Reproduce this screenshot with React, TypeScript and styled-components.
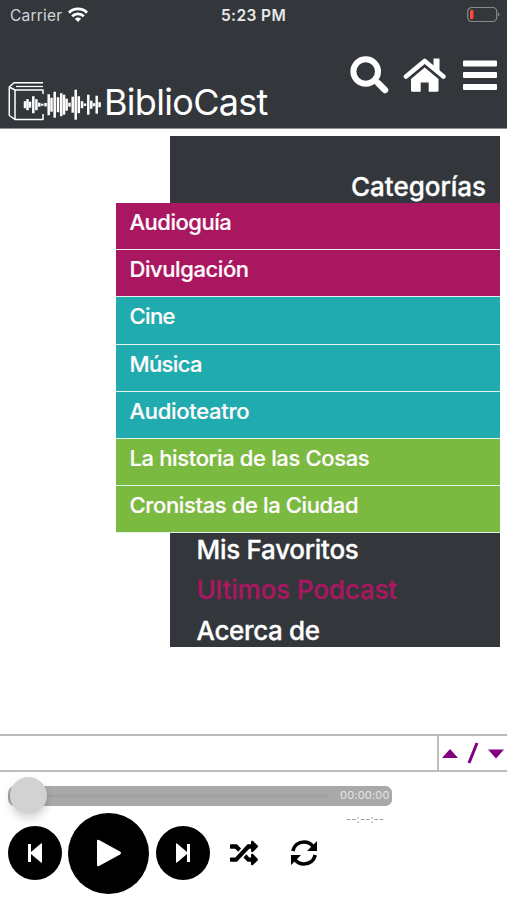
import React from "react";
import styled, { createGlobalStyle } from "styled-components";
import { FaRandom } from "react-icons/fa";

const Global = createGlobalStyle`
  * { box-sizing: border-box; }
  body { margin: 0; background: #fff; font-family: Inter, "Liberation Sans", sans-serif; }
`;
const Screen = styled.div`
  width: 507px; height: 900px; overflow: hidden; background: #fff;
  display: flex; flex-direction: column;
`;
const Header = styled.header`
  height: 129px; flex: none; background: #33373b; border-bottom: 1px solid #8b8e90; color: #fff;
`;
const StatusBar = styled.div`
  height: 30px; display: grid; grid-template-columns: 1fr auto 1fr; align-items: center;
  padding: 0 7px 0 10px; color: #e8e9e9;
`;
const Carrier = styled.div`
  display: flex; align-items: center; gap: 6px; font-size: 15.5px; letter-spacing: 0.2px; color: #d3d4d5;
`;
const Clock = styled.div`
  font-size: 15.5px; font-weight: 600; letter-spacing: 0.4px; margin-right: 3px;
`;
const BatterySlot = styled.div` display: flex; justify-content: flex-end; `;
const Bar = styled.div`
  display: flex; justify-content: space-between; height: 98px; padding: 0 10px 0 8px;
`;
const Brand = styled.div` display: flex; padding-top: 51px; `;
const BrandName = styled.h1`
  margin: -3px 0 0 1px; font-size: 36px; line-height: 48px; font-weight: 400; letter-spacing: -0.7px; white-space: nowrap;
`;
const Tools = styled.nav` display: flex; padding-top: 25px; `;
const ToolButton = styled.button<{ $gap?: number }>`
  border: 0; padding: 0; background: none; color: #fff; display: block; height: 42px; margin-left: ${(p) => p.$gap ?? 0}px;
  svg { display: block; }
`;
const Menu = styled.main`
  margin: 7px 7px 0 0; display: flex; flex-direction: column; align-items: flex-end; flex: none;
`;
const MenuTop = styled.div`
  width: 330.5px; height: 67.3px; background: #33373b; display: flex; align-items: flex-end; justify-content: flex-end; padding: 0 14px 0 0;
`;
const MenuTitle = styled.h2`
  margin: 0; color: #fff; font-size: 26px; line-height: 33px; font-weight: 500; letter-spacing: -0.03px;
  -webkit-text-stroke: 0.3px currentColor;
`;
const Category = styled.a<{ $color: string }>`
  display: block; width: 384.5px; height: 47.1px; background: ${(p) => p.$color};
  border-bottom: 1.5px solid #e3f3ee; padding: 6px 14px; color: #fffafc; font-size: 22px; line-height: 27px; font-weight: 500;
  -webkit-text-stroke: 0.2px currentColor;
`;
const MenuBottom = styled.div`
  width: 330.5px; height: 114px; background: #33373b; padding-left: 27px;
`;
const MenuLink = styled.a<{ $active?: boolean }>`
  display: block; height: 40.5px; line-height: 33px; font-size: 26px; font-weight: 500; color: ${(p) => (p.$active ? "#a91760" : "#fff")};
  -webkit-text-stroke: 0.3px currentColor;
`;
const Fit = styled.span<{ $ls: number }>` letter-spacing: ${(p) => p.$ls}px; white-space: nowrap; `;
const Player = styled.footer` margin-top: auto; height: 166px; flex: none; `;
const TrackRow = styled.div`
  height: 38px; border-top: 2px solid #bcbcbc; border-bottom: 2px solid #bcbcbc; display: flex;
`;
const TrackName = styled.div` width: 439px; border-right: 2px solid #bcbcbc; `;
const Expand = styled.button`
  flex: 1; border: 0; background: none; padding: 0; svg { display: block; }
`;
const Seek = styled.div`
  width: 384px; height: 20px; margin: 14px 0 0 8px; border-radius: 7px;
  background: linear-gradient(#a9a9a9 38%, #9f9f9f 50%, #a9a9a9 62%);
  display: flex; align-items: center; justify-content: space-between;
`;
const Knob = styled.div`
  width: 37px; height: 37px; margin: -2px 0 0 2px; border-radius: 50%; background: #d2d2d2; box-shadow: 0 5px 9px rgba(0,0,0,.16);
`;
const Elapsed = styled.span`
  width: 64px; height: 20px; line-height: 19px; padding-left: 12px; background: #a9a9a9; border-radius: 0 7px 7px 0; color: #e5e5e5;
  font-size: 11px; letter-spacing: 0.2px; white-space: nowrap;
`;
const Remaining = styled.div`
  margin-left: 346px; height: 14px; line-height: 14px; font-size: 11px; color: #999; letter-spacing: 0.2px; margin-top: 6px;
`;
const Controls = styled.div` display: flex; align-items: center; padding-left: 8px; height: 82px; margin-top: -14px; `;
const RoundButton = styled.button<{ $size: number; $gap?: number }>`
  width: ${(p) => p.$size}px; height: ${(p) => p.$size}px; border-radius: 50%; background: #000; color: #fff;
  border: 0; padding: 0; margin-left: ${(p) => p.$gap ?? 0}px; display: flex; align-items: center; justify-content: center; flex: none;
`;
const PlainButton = styled.button<{ $gap: number }>`
  border: 0; background: none; padding: 0; margin-left: ${(p) => p.$gap}px; color: #000; display: flex;
`;

const purple = "#a91760", teal = "#20acae", green = "#7aba41";
const categories: [string, string, number][] = [
  ["Audioguía", purple, -0.5], ["Divulgación", purple, -0.42], ["Cine", teal, -0.6], ["Música", teal, -0.6],
  ["Audioteatro", teal, -0.3], ["La historia de las Cosas", green, -0.36], ["Cronistas de la Ciudad", green, -0.37],
];
const wave: [number, number][] = [
  [17, 7], [19.5, 11], [22, 6], [25.3, 17], [28.4, 11], [31.3, 4], [34.3, 2], [37.6, 3.5], [40.7, 21], [43.5, 14],
  [46.7, 26], [50, 15], [53.2, 23], [56, 20], [58.6, 12], [61.5, 4], [64.7, 16], [67.7, 30], [70.8, 17], [74, 7],
  [77, 2.5], [80.3, 20], [83.3, 8], [86, 3], [88.7, 18], [91.6, 5],
];
const Logo = () => (
  <svg width="95" height="42" viewBox="0 0 95 42" fill="none" stroke="#fff">
    <path d="M35 1.700H6L1.300 6v28.500L7 38.500h28V33M35 13V9H7L1.300 6M7 9v29.500" strokeWidth="1.500" strokeLinejoin="round" />
    <path d="M8 5.500h27" strokeWidth="1.200" />
    {wave.map(([x, h]) => <path key={x} d={`M${x} ${23.7 - h / 2}v${h}`} strokeWidth="2.5" />)}
  </svg>
);
const Refresh = () => (
  <svg width="28" height="28" viewBox="0 0 28 28" fill="none" stroke="#000" strokeWidth="3.6">
    <path d="M2.800 12C4 6.500 8.500 3 14 3c4 0 7 1.700 9 4.500M25.200 16C24 21.500 19.500 25 14 25c-4 0-7-1.700-9-4.500" />
    <path d="M27 2v10H17zM1 26V16h10z" fill="#000" stroke="none" />
  </svg>
);

export default function App() {
  return (
    <>
      <Global />
      <Screen>
        <Header>
          <StatusBar>
            <Carrier>
              <span>Carrier</span>
              <svg width="20" height="16" viewBox="0 0 20 16" fill="none" stroke="#fff" strokeWidth="2.8">
                <path d="M1 5.7a12.7 12.7 0 0 1 18 0M4.2 9.2a8.2 8.2 0 0 1 11.6 0" />
                <path d="m10 15-3.1-3.2a4.4 4.4 0 0 1 6.2 0z" fill="#fff" stroke="none" />
              </svg>
            </Carrier>
            <Clock>5:23 PM</Clock>
            <BatterySlot>
              <svg width="34" height="18" viewBox="0 0 34 18">
                <rect x="1.7" y="1.5" width="29" height="14" rx="4" fill="none" stroke="#888b8d" strokeWidth="1.2" />
                <rect x="4" y="3.700" width="3.4" height="9.5" rx="1.5" fill="#ff463d" />
                <path d="M32 6.500q3 2 0 4z" fill="#888b8d" />
              </svg>
            </BatterySlot>
          </StatusBar>
          <Bar>
            <Brand><Logo /><BrandName>BiblioCast</BrandName></Brand>
            <Tools>
              <ToolButton aria-label="Buscar">
                <svg width="41" height="42" viewBox="0 0 41 42" fill="none" stroke="#fff">
                  <circle cx="15.700" cy="16.500" r="12.300" strokeWidth="6" />
                  <path d="m28.500 28.500 6.500 6.500" strokeWidth="6.500" strokeLinecap="round" />
                  <path d="m24.500 25 4 4" strokeWidth="4.500" />
                </svg>
              </ToolButton>
              <ToolButton $gap={12} aria-label="Inicio">
                <svg width="43" height="42" viewBox="0 0 43 42" fill="#fff">
                  <path d="m3 21.500 18.700-15.500 18.700 15.500" fill="none" stroke="#fff" strokeWidth="4.600" strokeLinecap="round" strokeLinejoin="round" />
                  <path d="M30.500 3.500h6v14l-6-5zM21.700 12.500 35.500 24v11.500q0 1.200-1.200 1.200h-8.600V27.500h-8v9.200H9.200q-1.200 0-1.200-1.200V24z" />
                </svg>
              </ToolButton>
              <ToolButton $gap={17} aria-label="Menú">
                <svg width="34" height="42" viewBox="0 0 34 42" fill="#fff">
                  <rect y="5.500" width="34" height="6" rx="1" /><rect y="17" width="34" height="6" rx="1" /><rect y="29" width="34" height="6" rx="1" />
                </svg>
              </ToolButton>
            </Tools>
          </Bar>
        </Header>
        <Menu>
          <MenuTop><MenuTitle>Categorías</MenuTitle></MenuTop>
          {categories.map(([name, color, ls]) => <Category key={name} $color={color}><Fit $ls={ls}>{name}</Fit></Category>)}
          <MenuBottom>
            <MenuLink><Fit $ls={-0.28}>Mis Favoritos</Fit></MenuLink>
            <MenuLink $active><Fit $ls={-0.13}>Ultimos Podcast</Fit></MenuLink>
            <MenuLink><Fit $ls={-0.35}>Acerca de</Fit></MenuLink>
          </MenuBottom>
        </Menu>
        <Player>
          <TrackRow>
            <TrackName />
            <Expand aria-label="Expandir">
              <svg width="68" height="34" viewBox="0 0 68 34" fill="#800080">
                <path d="m3 22 8-9 8 9zM49 13.500h16l-8 9z" /><path d="m30 27 8-20" stroke="#800080" strokeWidth="3" />
              </svg>
            </Expand>
          </TrackRow>
          <Seek><Knob /><Elapsed>00:00:00</Elapsed></Seek>
          <Remaining>--:--:--</Remaining>
          <Controls>
            <RoundButton $size={54} aria-label="Anterior">
              <svg width="16" height="20" viewBox="0 0 16 20" fill="#fff"><path d="M1 1h3v8L14 .5q1-.5 1 .5v18q0 1-1 .5L4 11v8H1z" /></svg>
            </RoundButton>
            <RoundButton $size={81} $gap={6} aria-label="Reproducir">
              <svg width="26" height="28" viewBox="0 0 26 28" fill="#fff"><path d="M1 2q0-2 2-1l21 11.500q2 1.500 0 3L3 27q-2 1-2-1z" /></svg>
            </RoundButton>
            <RoundButton $size={54} $gap={7} aria-label="Siguiente">
              <svg width="16" height="20" viewBox="0 0 16 20" fill="#fff"><path d="M15 1h-3v8L2 .5Q1 0 1 1v18q0 1 1 .5l10-8.500v8h3z" /></svg>
            </RoundButton>
            <PlainButton $gap={20} aria-label="Aleatorio"><FaRandom size={28} /></PlainButton>
            <PlainButton $gap={32} aria-label="Repetir"><Refresh /></PlainButton>
          </Controls>
        </Player>
      </Screen>
    </>
  );
}
